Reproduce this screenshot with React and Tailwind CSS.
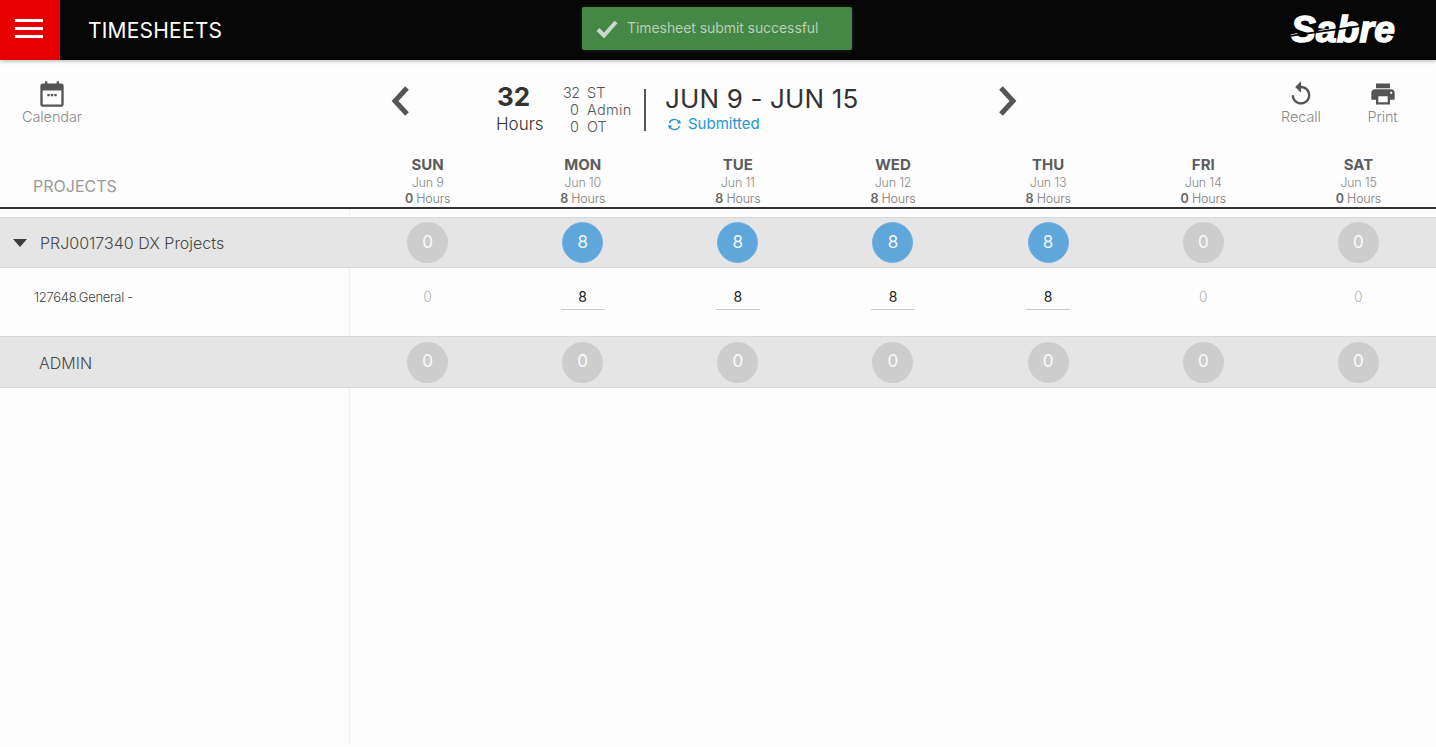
import React from 'react';

const days = [
  { name: 'SUN', date: 'Jun 9', hours: 0 },
  { name: 'MON', date: 'Jun 10', hours: 8 },
  { name: 'TUE', date: 'Jun 11', hours: 8 },
  { name: 'WED', date: 'Jun 12', hours: 8 },
  { name: 'THU', date: 'Jun 13', hours: 8 },
  { name: 'FRI', date: 'Jun 14', hours: 0 },
  { name: 'SAT', date: 'Jun 15', hours: 0 },
];

function ToolButton({ label, children, className }) {
  return (
    <div className={`flex flex-col items-center ${className}`}>
      <svg viewBox="0 0 24 24" className="w-[28px] h-[28px] fill-[#555555]">
        {children}
      </svg>
      <span className="text-[14.5px] leading-[17px] tracking-[-0.1px] text-[#8a8a8a] font-light">{label}</span>
    </div>
  );
}

function Chevron({ d }) {
  return (
    <svg viewBox="0 0 24 32" className="w-[24px] h-[32px]">
      <path d={d} fill="none" stroke="#555555" strokeWidth="5" />
    </svg>
  );
}

function Circle({ value }) {
  return (
    <div
      className={`w-[41px] h-[41px] rounded-full flex items-center justify-center text-[17px] text-white/90 ${
        value > 0 ? 'bg-[#5fa6db] border border-[#74b2e0]' : 'bg-[#cdcdcd]'
      }`}
    >
      {value}
    </div>
  );
}

function SummaryRow({ label, values, hasCaret, className }) {
  return (
    <div className={`flex bg-[#e5e5e5] border-y border-[#d8d8d8] ${className}`}>
      <div className="w-[350px] shrink-0 flex items-center pl-[13px] text-[16px] text-[#484848] font-light">
        {hasCaret ? (
          <svg viewBox="0 0 14 8" className="w-[14px] h-[8px] mr-[13px] fill-[#3c3c3c]">
            <path d="M0 0h14L7 8z" />
          </svg>
        ) : (
          <span className="w-[26px]" />
        )}
        <span className="pt-[1px]">{label}</span>
      </div>
      <div className="flex-1 grid grid-cols-7">
        {values.map((v, i) => (
          <div key={i} className="flex items-center justify-center">
            <Circle value={v} />
          </div>
        ))}
      </div>
    </div>
  );
}

export default function App() {
  return (
    <div className="relative h-[747px] overflow-hidden bg-[#fdfdfd] font-['Inter','Liberation_Sans',sans-serif]">
      <header className="h-[60px] bg-[#060606] flex items-center justify-between shadow-[0_1px_4px_rgba(0,0,0,0.3)]">
        <div className="flex items-center">
          <div className="w-[60px] h-[60px] bg-[#e60000] flex flex-col items-start justify-center gap-[5px] pl-[15px] pb-[3px]">
            <span className="block w-[28px] h-[3px] bg-white" />
            <span className="block w-[28px] h-[3px] bg-white" />
            <span className="block w-[28px] h-[3px] bg-white" />
          </div>
          <h1 className="ml-[28px] pt-[1px] text-[21px] tracking-[0.2px] text-white">TIMESHEETS</h1>
        </div>
        <div className="relative mr-[38px] w-[110px] text-center">
          <span className="font-['Liberation_Sans',sans-serif] font-bold italic text-[37px] leading-[40px] tracking-[0.2px] text-white [-webkit-text-stroke:1.5px_white]">
            Sabre
          </span>
          <span className="absolute left-[2px] top-[20px] w-[70px] h-[2px] bg-[#060606] -rotate-[8deg]" />
        </div>
      </header>

      <div className="absolute left-[582px] top-[7px] w-[270px] h-[43px] rounded-[2px] bg-[#458745] shadow-[0_0_4px_rgba(255,255,255,0.15)] flex items-center pl-[14px] pb-[2px]">
        <svg viewBox="0 0 22 18" className="w-[22px] h-[18px] mr-[9px] mt-[2px]">
          <path d="M2 9.500l6 6L20 2" fill="none" stroke="#cfd8cf" strokeWidth="4" />
        </svg>
        <span className="text-[14px] tracking-[-0.07px] text-[#b9d0b9]">Timesheet submit successful</span>
      </div>

      <div className="h-[90px] flex items-start pt-[20px]">
        <ToolButton label="Calendar" className="w-[104px]">
          <path d="M6 1h2v2h8V1h2v2h2a2 2 0 0 1 2 2v16a2 2 0 0 1-2 2H4a2 2 0 0 1-2-2V5a2 2 0 0 1 2-2h2zM4 9v12h16V9zm4 3h2v2H8zm3 0h2v2h-2zm3 0h2v2h-2z" />
        </ToolButton>
        <div className="ml-[284px] mt-[5px]">
          <Chevron d="M19 3L7 16l12 13" />
        </div>
        <div className="w-[47px] ml-[84px] flex flex-col items-start">
          <span className="text-[26px] leading-[33px] font-bold text-[#333333] ml-[1px]">32</span>
          <span className="text-[17px] leading-[22px] font-light text-[#333333]">Hours</span>
        </div>
        <div className="ml-[20px] mt-[4px] w-[82px] text-[14.5px] leading-[17px] font-light text-[#555555]">
          <div className="flex"><span className="w-[16px] text-right tracking-[-0.5px]">32</span><span className="ml-[8px]">ST</span></div>
          <div className="flex"><span className="w-[16px] text-right">0</span><span className="ml-[8px] tracking-[0.3px]">Admin</span></div>
          <div className="flex"><span className="w-[16px] text-right">0</span><span className="ml-[8px]">OT</span></div>
        </div>
        <div className="w-[2px] h-[42px] bg-[#555555] mt-[9px] -ml-[1px]" />
        <div className="ml-[19px] w-[331px] mt-[2px]">
          <div className="text-[26px] leading-[33px] tracking-[0.15px] font-normal text-[#333333]">JUN 9 - JUN 15</div>
          <div className="flex items-center text-[#2496d8] text-[15px] leading-[18px] ml-[2px]">
            <svg viewBox="0 0 16 16" className="w-[15px] h-[15px] mr-[6px]">
              <path d="M2.500 6.500A5.600 5.600 0 0 1 12.500 5M13.500 9.500A5.600 5.600 0 0 1 3.500 11" fill="none" stroke="#2496d8" strokeWidth="1.500" />
              <path d="M15 7H10.500L13.500 3zM1 9h4.500L2.500 13z" fill="#2496d8" />
            </svg>
            Submitted
          </div>
        </div>
        <div className="mt-[5px]">
          <Chevron d="M5 3l12 13L5 29" />
        </div>
        <div className="flex ml-auto mr-[18px]">
          <ToolButton label="Recall" className="w-[92px]">
            <path d="M12 5V1L7 6l5 5V7c3.310 0 6 2.690 6 6s-2.690 6-6 6-6-2.690-6-6H4c0 4.420 3.580 8 8 8s8-3.580 8-8-3.580-8-8-8z" />
          </ToolButton>
          <ToolButton label="Print" className="w-[71px]">
            <path d="M19 8H5c-1.660 0-3 1.340-3 3v6h4v4h12v-4h4v-6c0-1.660-1.340-3-3-3zm-3 11H8v-5h8v5zm3-7c-.55 0-1-.45-1-1s.45-1 1-1 1 .45 1 1-.45 1-1 1zm-1-9H6v4h12V3z" />
          </ToolButton>
        </div>
      </div>

      <div className="flex h-[59px] border-b-2 border-[#333333]">
        <div className="w-[350px] shrink-0 pl-[33px] pt-[26px] text-[16px] leading-[20px] text-[#9a9a9a]">PROJECTS</div>
        <div className="flex-1 grid grid-cols-7">
          {days.map((d) => (
            <div key={d.name} className="flex flex-col items-center pt-[6px]">
              <span className="text-[15px] leading-[18px] font-bold text-[#5c5c5c]">{d.name}</span>
              <span className="mt-[1px] text-[12.5px] leading-[16px] font-light tracking-[-0.2px] text-[#8a8a8a]">{d.date}</span>
              <span className="text-[12.5px] leading-[16px] font-light tracking-[-0.2px] text-[#7a7a7a]">
                <span className="font-semibold text-[#666666]">{d.hours}</span> Hours
              </span>
            </div>
          ))}
        </div>
      </div>

      <div className="flex flex-col">
        <div className="h-[8px] ml-[349px] border-l border-[#f0f0f0]" />
        <SummaryRow label="PRJ0017340 DX Projects" values={days.map((d) => d.hours)} hasCaret className="h-[51px]" />
        <div className="flex h-[68px]">
          <div className="w-[350px] shrink-0 border-r border-[#f0f0f0] pl-[34px] pt-[20px] text-[13px] leading-[18px] tracking-[-0.3px] font-light text-[#444444]">
            127648.General -
          </div>
          <div className="flex-1 grid grid-cols-7">
            {days.map((d) =>
              d.hours > 0 ? (
                <div key={d.name} className="flex justify-center pt-[20px]">
                  <div className="w-[44px] h-[22px] text-center text-[14px] leading-[18px] text-[#222222] border-b border-[#cccccc]">
                    {d.hours}
                  </div>
                </div>
              ) : (
                <div key={d.name} className="flex justify-center pt-[19px] text-[14px] leading-[20px] text-[#b5b5b5] font-light">
                  0
                </div>
              )
            )}
          </div>
        </div>
        <SummaryRow label="ADMIN" values={[0, 0, 0, 0, 0, 0, 0]} className="h-[52px]" />
        <div className="h-[357px] w-[350px] border-r border-[#f0f0f0]" />
      </div>
    </div>
  );
}
